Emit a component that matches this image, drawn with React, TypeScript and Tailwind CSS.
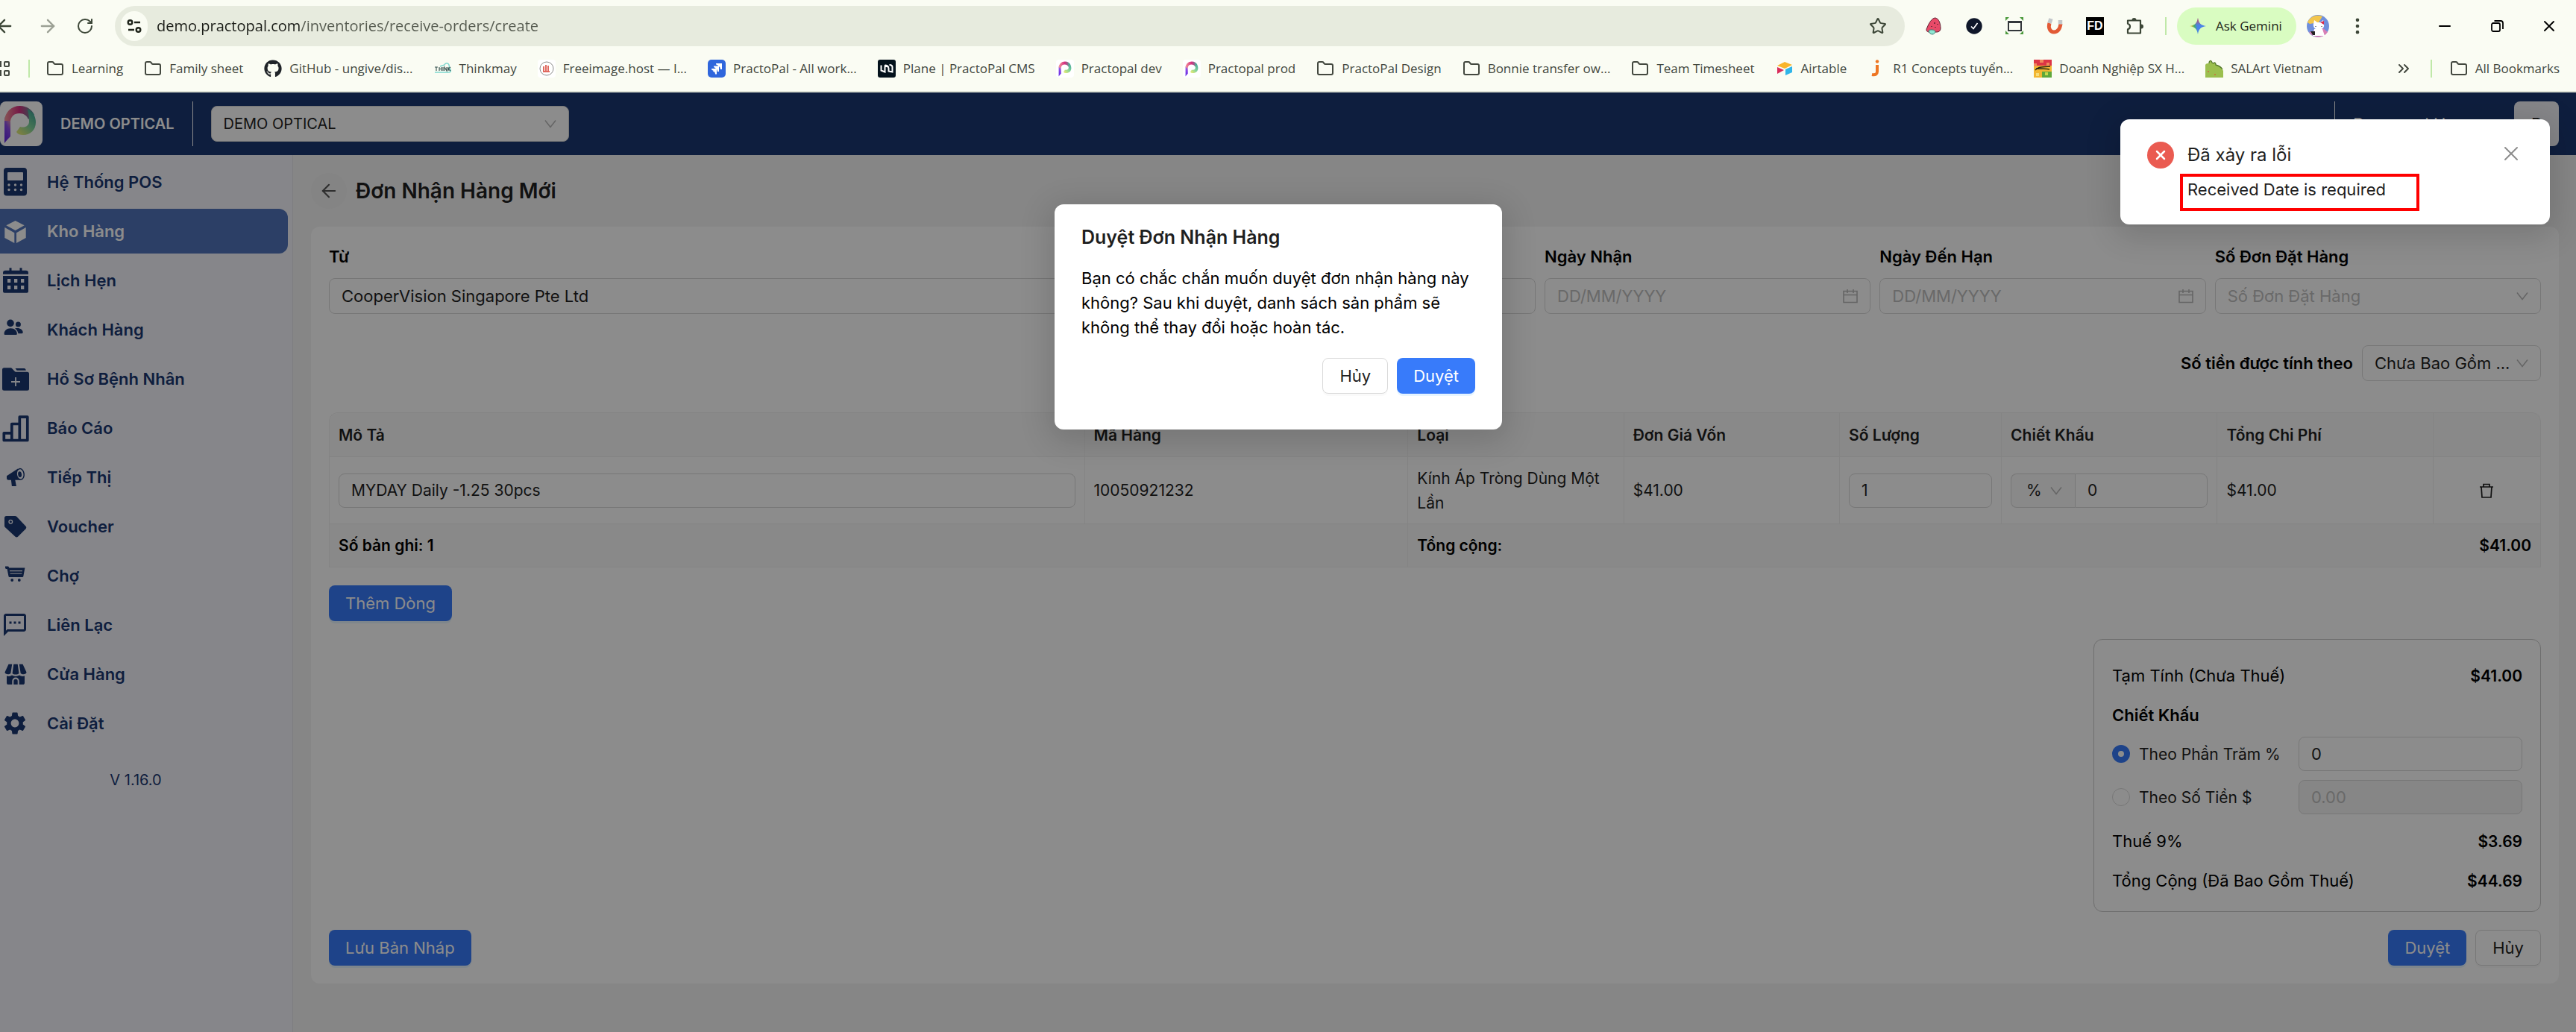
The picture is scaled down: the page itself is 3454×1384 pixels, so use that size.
import type { ReactNode } from 'react'
import clsx from 'clsx'
import { FaGithub } from 'react-icons/fa'
import { MdOutlineSms, MdSettings } from 'react-icons/md'
import {
  ArrowLeft,
  ArrowRight,
  ChevronsRight,
  EllipsisVertical,
  Folder,
  Minus,
  RotateCw,
  Star,
  X,
} from 'lucide-react'

type IconProps = { className?: string }

const Glyph = ({ children, className }: { children: ReactNode; className?: string }) => (
  <svg viewBox="0 0 40 40" fill="currentColor" className={clsx('size-10', className)}>
    {children}
  </svg>
)

const IconPos = () => (
  <Glyph>
    <path
      fillRule="evenodd"
      d="M9 1h23a4 4 0 0 1 4 4v29.500a4 4 0 0 1-4 4H9a4 4 0 0 1-4-4V5a4 4 0 0 1 4-4Zm2 6a1 1 0 0 0-1 1v9a1 1 0 0 0 1 1h19a1 1 0 0 0 1-1V8a1 1 0 0 0-1-1Z"
    />
    {[24, 30.500].map((y) =>
      [12, 20.500, 28.500].map((x) => <circle key={`${x}-${y}`} cx={x} cy={y} r="1.7" fill="#f4f5fa" />)
    )}
  </Glyph>
)

const IconBox = () => (
  <Glyph>
    <path d="M20.600 6 32.700 12.300 20.600 19 8.300 12.300ZM6.300 15l13 7.300V36l-13-7ZM34.700 15 22 22.300V36l12.700-7Z" />
  </Glyph>
)

const IconCalendarGrid = () => (
  <Glyph>
    <path d="M4 11.700V10a3.300 3.300 0 0 1 3.300-3.300h5.200V3.300h3v3.400h11V3.300h3v3.400h5.200A3.300 3.300 0 0 1 38 10v1.700Z" />
    <path
      fillRule="evenodd"
      d="M4 14h34v20.700a2 2 0 0 1-2 2H6a2 2 0 0 1-2-2Zm6 4v5h4.300v-5Zm9 0v5h4.300v-5Zm9 0v5h4.300v-5Zm-18 9v5h4.300v-5Zm9 0v5h4.300v-5Zm9 0v5h4.300v-5Z"
    />
  </Glyph>
)

const IconUsers = () => (
  <Glyph>
    <circle cx="14" cy="11.400" r="4.800" />
    <circle cx="24.400" cy="13" r="3.500" />
    <path d="M5.600 25.500c0-4 3.400-7.300 8.600-7.300s8.600 3.300 8.600 7.300c0 1-.5 1.600-1.400 1.600H7c-.9 0-1.400-.6-1.400-1.600ZM20 18.600c5.400-1.700 10.300 1 10.700 5 0 1-.4 1.600-1.300 1.600h-5c-.4-2.700-2-5-4.400-6.600Z" />
  </Glyph>
)

const IconFolderPlus = () => (
  <Glyph>
    <path d="M5.500 5.300H14c1 0 1.500.3 2.200 1l3.300 3.400c.7.700 1.200 1 2.200 1h14.800A2.500 2.500 0 0 1 39 13.200v20a2.500 2.500 0 0 1-2.500 2.500h-31A2.500 2.500 0 0 1 3 33.200V7.800a2.500 2.500 0 0 1 2.500-2.500ZM20.500 6h12c1.200 0 2 .8 2.300 2.700H22.600Z" />
    <path d="M21 18v12M15 24h12" stroke="#f4f5fa" strokeWidth="1.800" />
  </Glyph>
)

const IconBars = () => (
  <Glyph>
    <path
      d="M5.300 36.500v-9.700h10.500v9.700ZM15.800 36.500v-22h10.500v22ZM26.300 36.500V5.200h10.500v31.300Z"
      fill="none"
      stroke="currentColor"
      strokeWidth="3.700"
      strokeLinejoin="round"
    />
  </Glyph>
)

const IconMegaphone = () => (
  <Glyph>
    <path d="M9 18.300 24 8.500l3.500 15.300H11.400A2.400 2.400 0 0 1 9 21.400ZM14.800 23h5.400l1.700 9h-6Z" />
    <ellipse cx="27.200" cy="15.900" rx="5" ry="7.300" transform="rotate(-8 27 16)" fill="#f4f5fa" stroke="currentColor" strokeWidth="1.500" />
    <ellipse cx="26.600" cy="16" rx="2.400" ry="3.900" transform="rotate(-8 27 16)" />
  </Glyph>
)

const IconTag = () => (
  <Glyph>
    <path d="M8.500 6h11.600c1 0 1.700.4 2.400 1.100l12 12.700c1 1.100 1 2.300 0 3.400L24 33.700c-1.100 1-2.400 1-3.500 0L7 21.300c-.7-.7-1-1.300-1-2.300V8.500A2.500 2.500 0 0 1 8.500 6Z" />
    <circle cx="14.300" cy="13.700" r="2.300" fill="none" stroke="#f4f5fa" strokeWidth="1.300" />
  </Glyph>
)

const IconCart = () => (
  <Glyph>
    <path d="M7 7.500h3.500c1 0 1.500.8 1.700 2h21.200l-2 11c-.2 1-.8 1.600-1.900 1.600H13.200c-1 0-1.600-.6-1.800-1.600L9.600 11H8.300A1.500 1.500 0 0 1 7 9.500Z" />
    <path d="M13 13.600h17M13.600 17.300h15.700" stroke="#f4f5fa" strokeWidth="1.100" />
    <circle cx="16.200" cy="26" r="1.900" />
    <circle cx="25.800" cy="26" r="1.900" />
  </Glyph>
)

const IconStore = () => (
  <Glyph>
    <path d="M11.500 6.700h4.700l-1.900 12.200c-2 2-7.600 1.700-7.800-1.500ZM18.300 6.700h5.400l1.700 12.200c-1.700 2-7.200 2-8.800 0ZM25.800 6.700h4.700l5 10.700c0 3.200-5.700 3.500-7.800 1.500Z" />
    <path
      fillRule="evenodd"
      d="M9 22.500c3 .9 5.300.4 7-1 2.900 1.900 7 1.900 10 0 1.700 1.400 4 1.900 7 1v9.200c0 1.400-.9 2.300-2.300 2.300H11.300C9.900 34 9 33.100 9 31.700Zm7.300 11.500h9.400v-4.800a4.700 4.700 0 0 0-9.400 0Z"
    />
    <path d="M18.300 34v-4.600a2.700 2.700 0 0 1 5.400 0V34Z" />
  </Glyph>
)

const menu = [
  { name: 'Hệ Thống POS', icon: <IconPos /> },
  { name: 'Kho Hàng', icon: <IconBox />, active: true },
  { name: 'Lịch Hẹn', icon: <IconCalendarGrid /> },
  { name: 'Khách Hàng', icon: <IconUsers /> },
  { name: 'Hồ Sơ Bệnh Nhân', icon: <IconFolderPlus /> },
  { name: 'Báo Cáo', icon: <IconBars /> },
  { name: 'Tiếp Thị', icon: <IconMegaphone /> },
  { name: 'Voucher', icon: <IconTag /> },
  { name: 'Chợ', icon: <IconCart /> },
  { name: 'Liên Lạc', icon: <MdOutlineSms className="ml-0.5 size-9" /> },
  { name: 'Cửa Hàng', icon: <IconStore /> },
  { name: 'Cài Đặt', icon: <MdSettings className="ml-0.5 size-9" /> },
]

const PalLogo = ({ className }: IconProps) => (
  <svg viewBox="0 0 60 60" className={className}>
    <defs>
      <linearGradient id="palStem" x1="0" y1="1" x2="0.300" y2="0">
        <stop offset="0" stopColor="#5b1fe0" />
        <stop offset="0.600" stopColor="#8a4be8" />
        <stop offset="1" stopColor="#f2a3a0" />
      </linearGradient>
      <linearGradient id="palTop" x1="0" y1="0" x2="1" y2="0">
        <stop offset="0" stopColor="#f59a9a" />
        <stop offset="0.500" stopColor="#d62f80" />
        <stop offset="1" stopColor="#4b9c9b" />
      </linearGradient>
      <linearGradient id="palBowl" x1="1" y1="0" x2="0.300" y2="1">
        <stop offset="0" stopColor="#2f9a94" />
        <stop offset="0.600" stopColor="#7fd39b" />
        <stop offset="1" stopColor="#dbe77a" />
      </linearGradient>
    </defs>
    <path d="M9 56V26c0-6 3-10 8-13v34c-3 3-6 6-8 9Z" fill="url(#palStem)" />
    <path d="M9 26C10 14 18 6 30 6c9 0 16 5 19 12l-8 6c-2-5-6-8-12-8-7 0-11 4-12 10Z" fill="url(#palTop)" />
    <path d="M40 10c7 4 11 10 11 18 0 10-7 17-17 17-4 0-7-1-9-4l5-7c6 2 12-1 12-7 0-7-1-12-2-17Z" fill="url(#palBowl)" />
  </svg>
)

const ThinkmayMark = () => (
  <svg viewBox="0 0 24 24" className="size-6">
    <path d="M1 17h19c3 0 3-4 1-5l-1-5c-1-3-5-3-6 0L8 9" fill="none" stroke="#7fd8cf" strokeWidth="1.500" />
    <path d="M1 10h4M3 10v5M7 10v5M10 10v5M7 12.500h3M12 10v5M14 15v-5l3 5v-5M19 10v5M22 10l-3 2.500L22 15" fill="none" stroke="#35504e" strokeWidth="1.100" />
  </svg>
)

const FreeimageMark = () => (
  <svg viewBox="0 0 24 24" className="size-6">
    <rect width="24" height="24" rx="4" fill="#fff" />
    <circle cx="12" cy="12" r="9" fill="none" stroke="#8b8b8b" />
    <path d="M8 16V9M11 16V7M14 16V8M7 16h9" stroke="#e0695f" strokeWidth="2" />
  </svg>
)

const JiraMark = () => (
  <svg viewBox="0 0 24 24" className="size-6">
    <rect width="24" height="24" rx="5" fill="#2f66dc" />
    <path d="M11 5h8v8h-2.200c0-3-1-4-3-4V7.500C11.500 7.500 11 6.500 11 5ZM8 8.500h7V16h-2c0-2.500-1-3.500-2.700-3.500V11C8.500 11 8 10 8 8.500ZM5 12h7v7.500h-2c0-2.500-1-3.500-2.700-3.500v-1.500C5.500 14.500 5 13.500 5 12Z" fill="#fff" />
  </svg>
)

const PlaneMark = () => (
  <svg viewBox="0 0 24 24" className="size-6">
    <rect width="24" height="24" rx="3" fill="#04121c" />
    <path d="M4.500 7.500v7l5 2v-7c3-1 5 0 5 2v4l5 1V10c0-2-2-3-4-3M9 8c2-1 4 0 5.500 2" fill="none" stroke="#fff" strokeWidth="2" />
  </svg>
)

const AirtableMark = () => (
  <svg viewBox="0 0 24 24" className="size-6">
    <path d="m2 8 10-5 10 4-10 5Z" fill="#f9b52b" />
    <path d="M13 13 22 9v8l-9 4Z" fill="#2fb5e9" />
    <path d="M2 10v9l9-5Z" fill="#d92c5b" />
  </svg>
)

const JMark = () => (
  <svg viewBox="0 0 24 24" className="size-6">
    <path d="M13 7v9c0 3-2 5-7 4" fill="none" stroke="#ee7623" strokeWidth="4" />
    <circle cx="13" cy="2.500" r="2.200" fill="#ee7623" />
  </svg>
)

const AgriMark = () => (
  <svg viewBox="0 0 24 24" className="size-6">
    <path d="M0 0h24v8H0Z" fill="#dc3545" />
    <path d="M0 8h24v16H0Z" fill="#f2b632" />
    <path d="M11 16h13v8H11Z" fill="#5fa83b" />
    <path d="M8 0h5v4H8ZM0 5h4v4H0ZM17 4h4v4h-4Z" fill="#f08a5d" />
    <path d="M2 14c4-5 8-4 20-5M3 12c5 0 12 0 18 1" fill="none" stroke="#2b2a16" strokeWidth="1.500" />
    <path d="M3 18h4v4H3Z" fill="#f7dc7a" />
    <path d="M15 17h4v4h-4Z" fill="#c5d94c" />
  </svg>
)

const SalMark = () => (
  <svg viewBox="0 0 24 24" className="size-6">
    <path d="M0 24V7c1-2 3-2 5-2 0-4 3-5 4-1l2 1c1-2 3-1 3 2 5 1 8 4 10 8v9Z" fill="#9bbf4e" />
    <path d="M5 5c0-4 3-5 4-1l2 1c1-2 3-1 3 2 4 1 7 3 9 6" fill="none" stroke="#567a2b" strokeWidth="1.300" />
    <circle cx="4" cy="16" r="1" fill="#cf6a3c" />
    <circle cx="13" cy="20" r="1" fill="#cf6a3c" />
  </svg>
)

const FolderMark = () => <Folder className="size-6" strokeWidth={2} color="#43483f" />

const PalMark = () => (
  <span className="rounded bg-white">
    <PalLogo className="size-6" />
  </span>
)

const bookmarks = [
  { name: 'Learning', icon: <FolderMark /> },
  { name: 'Family sheet', icon: <FolderMark /> },
  { name: 'GitHub - ungive/dis...', icon: <FaGithub className="size-6" color="#1f2328" /> },
  { name: 'Thinkmay', icon: <ThinkmayMark /> },
  { name: 'Freeimage.host — I...', icon: <FreeimageMark /> },
  { name: 'PractoPal - All work...', icon: <JiraMark /> },
  { name: 'Plane | PractoPal CMS', icon: <PlaneMark /> },
  { name: 'Practopal dev', icon: <PalMark /> },
  { name: 'Practopal prod', icon: <PalMark /> },
  { name: 'PractoPal Design', icon: <FolderMark /> },
  { name: 'Bonnie transfer ow...', icon: <FolderMark /> },
  { name: 'Team Timesheet', icon: <FolderMark /> },
  { name: 'Airtable', icon: <AirtableMark /> },
  { name: 'R1 Concepts tuyển...', icon: <JMark /> },
  { name: 'Doanh Nghiệp SX H...', icon: <AgriMark /> },
  { name: 'SALArt Vietnam', icon: <SalMark /> },
]

function Extensions() {
  return (
    <div className="flex items-center gap-[30px] pl-[27px]">
      <svg viewBox="0 0 24 24" className="size-6">
        <path d="M14 1c5 1 7 8 7 14 0 3-2 5-5 5H6c-4 0-5-3-3-6C5 9 9 1 14 1Z" fill="#e84a68" stroke="#5d2232" />
        <path d="M5 18c3-2 8-1 9 1 0 2-2 4-4 4s-5-2-5-5Z" fill="#8fe6d2" stroke="#3f8076" />
        <path d="M13 7v2M17 9v1M9 12v1M14 13v1" stroke="#5d2232" strokeWidth="1.500" />
      </svg>
      <svg viewBox="0 0 24 24" className="size-6">
        <circle cx="12" cy="12" r="10.700" fill="#0f172a" />
        <path d="m8 12.500 3 3 5.500-7.500" fill="none" stroke="#fff" strokeWidth="1.700" />
      </svg>
      <svg viewBox="0 0 24 24" className="size-6">
        <path d="M0 0h5L0 5ZM24 0v5l-5-5ZM24 23h-5l5-5ZM0 23v-5l5 5Z" fill="#4c9a3d" />
        <path d="M4 6h17v12H4Z" fill="none" stroke="#33373b" strokeWidth="2" />
        <path d="M3 5h19v3H3Z" fill="#33373b" />
      </svg>
      <svg viewBox="0 0 24 24" className="size-6" fill="none">
        <path d="M5 8c-2 7 1 12 6 12s8-4 9-11" stroke="#e25a35" strokeWidth="5" />
        <path d="m7 2-2 6M19.500 4v5.500" stroke="#c3c7ca" strokeWidth="5.500" />
      </svg>
      <span className="flex size-6 items-center justify-center bg-black font-['Liberation_Sans',sans-serif] text-[16px] font-bold text-white">
        FD
      </span>
      <svg viewBox="0 0 24 24" className="size-6">
        <path
          d="M2 4.500h17v17H2v-5.200c4-1 4-6.600 0-7.600Z"
          fill="none"
          stroke="#3c4637"
          strokeWidth="2.200"
          strokeLinejoin="round"
        />
        <path d="M7.500 4a3 3 0 0 1 6 0ZM20 9.500a3 3 0 0 1 0 6Z" fill="#3c4637" />
      </svg>
    </div>
  )
}

function BrowserBar() {
  return (
    <div className="border-b-2 border-[#dfe3d6] bg-[#fafcf3] font-['Open_Sans',sans-serif] text-[#43483f]">
      <div className="flex h-[70px] items-center">
        <div className="flex w-[154px] items-center">
          <button aria-label="Back" className="-ml-2 w-[58px]"><ArrowLeft className="size-7" color="#3c4637" /></button>
          <button aria-label="Forward" className="w-[52px]"><ArrowRight className="size-7" color="#9ba094" /></button>
          <button aria-label="Reload"><RotateCw className="size-6" color="#3c4637" /></button>
        </div>
        <div className="flex h-[54px] flex-1 items-center rounded-full bg-[#e7ebde] pr-6 pl-2">
          <span className="mr-3 flex h-10 w-9 items-center justify-center rounded-full bg-[#fafcf3]">
            <svg viewBox="0 0 24 24" className="size-6" fill="none" stroke="#1f241b" strokeWidth="2.400">
              <circle cx="6.500" cy="7" r="2.800" />
              <path d="M12 7h8M4 17h8" />
              <circle cx="17.500" cy="17" r="2.800" />
            </svg>
          </span>
          {/* the host is darker than the path */}
          <input
            aria-label="Address"
            defaultValue="demo.practopal.com/inventories/receive-orders/create"
            className="flex-1 bg-[linear-gradient(90deg,#1a1c17_192px,#555a4f_192px)] bg-clip-text text-[20px] text-transparent outline-none"
          />
          <Star className="size-6" color="#3c4637" />
        </div>
        <Extensions />
        <span className="ml-7 h-6 w-[2px] bg-[#bfe8a8]" />
        <button className="ml-3.5 flex h-[50px] w-[160px] items-center gap-3 rounded-full bg-[#d9fcc1] pl-4 text-[17px] text-[#1c2418]">
          <svg viewBox="0 0 24 24" className="size-6">
            <defs>
              <linearGradient id="gem" x1="0.100" y1="0.600" x2="0.900" y2="0.500">
                <stop offset="0" stopColor="#e3b93c" />
                <stop offset="0.250" stopColor="#3fae6a" />
                <stop offset="0.450" stopColor="#4a83e8" />
              </linearGradient>
              <linearGradient id="gemTop" x1="0" y1="0" x2="0" y2="1">
                <stop offset="0" stopColor="#e2473c" />
                <stop offset="0.450" stopColor="#e2473c" stopOpacity="0" />
              </linearGradient>
            </defs>
            <path d="M12 1c1 7 4 10 11 11-7 1-10 4-11 11-1-7-4-10-11-11 7-1 10-4 11-11Z" fill="url(#gem)" />
            <path d="M12 1c1 7 4 10 11 11-7 1-10 4-11 11-1-7-4-10-11-11 7-1 10-4 11-11Z" fill="url(#gemTop)" />
          </svg>
          Ask Gemini
        </button>
        <svg viewBox="0 0 30 30" className="ml-3.5 size-[30px]">
          <circle cx="15" cy="15" r="15" fill="#6f8fdc" />
          <path d="M1 10a15 15 0 0 1 20-8l-5 8-12 2Z" fill="#f3c64c" />
          <path d="M3 23a15 15 0 0 0 25 0l-6-5Z" fill="#d97fb5" />
          <path d="M9 12 10 7l4 3h4l4-3 1 6c1 4-3 7-7 7s-8-3-7-8Z" fill="#fff" />
          <path d="M10 19h11l3 9H8Z" fill="#fff" />
          <path d="m18 10 5-2v5Z" fill="#d92c4b" />
          <path d="M12 15v1M20 15v1" stroke="#222" />
          <path d="M5 22h6v5H8Z" fill="#222" />
        </svg>
        <button aria-label="Menu" className="ml-6"><EllipsisVertical className="size-7" color="#3c4637" /></button>
        <div className="mr-6 ml-[91px] flex items-center gap-[46px] text-black">
          <button aria-label="Minimize"><Minus className="size-6" strokeWidth={2} /></button>
          <button aria-label="Restore">
            <svg viewBox="0 0 24 24" className="size-6" fill="none" stroke="currentColor" strokeWidth="1.800">
              <rect x="5" y="8" width="11" height="11" rx="2" />
              <path d="M8.500 5H17a3 3 0 0 1 3 3v8" />
            </svg>
          </button>
          <button aria-label="Close"><X className="size-6" strokeWidth={2} /></button>
        </div>
      </div>
      <div className="flex h-[52px] items-center pb-2 text-[17px]">
        <div className="flex w-[62px] items-center gap-6">
          <svg viewBox="0 0 14 24" className="h-6 w-3.5" fill="none" stroke="#43483f" strokeWidth="2">
            <rect x="6" y="3" width="6" height="6" rx="1" />
            <rect x="6" y="15" width="6" height="6" rx="1" />
            <path d="M0 3h1v6H0M0 15h1v6H0" />
          </svg>
          <span className="h-6 w-[2px] bg-[#bfe8a8]" />
        </div>
        <nav className="flex flex-1 items-center gap-7">
          {bookmarks.map((b) => (
            <a key={b.name} href="#" className="flex shrink-0 items-center gap-2.5 whitespace-nowrap">
              {b.icon}
              {b.name}
            </a>
          ))}
        </nav>
        <ChevronsRight className="size-6" />
        <span className="mx-6 h-6 w-[2px] bg-[#bfe8a8]" />
        <a href="#" className="mr-[22px] flex items-center gap-2.5">
          <FolderMark />
          All Bookmarks
        </a>
      </div>
    </div>
  )
}

const Chevron = ({ className }: IconProps) => (
  <svg viewBox="0 0 18 18" className={clsx('pointer-events-none absolute top-1/2 size-[18px] -translate-y-1/2', className)}>
    <path d="m2 4.500 7 9 7-9" fill="none" stroke="#b8b8b8" strokeWidth="1.500" />
  </svg>
)

const labelClass = 'mb-3 block font-semibold text-black'
const inputClass = 'h-[46px] w-full rounded-lg border border-[#d9d9d9] bg-white px-4 text-[#1f1f1f]'
const primaryClass = 'h-12 rounded-lg bg-[#387bfa] px-[22px] text-white shadow-[0_3px_0_rgba(5,145,255,0.1)]'
const defaultClass =
  'h-12 rounded-lg border border-[#d9d9d9] bg-white px-[22px] text-[#1f1f1f] shadow-[0_3px_0_rgba(0,0,0,0.02)]'

type SelectProps = { id: string; value: string; label?: string; muted?: boolean; className?: string }

function Select({ id, value, label, muted, className }: SelectProps) {
  return (
    <div className={clsx('relative', className)}>
      <select
        id={id}
        aria-label={label}
        className={clsx(
          'h-12 w-full appearance-none rounded-lg border border-[#d9d9d9] bg-white pr-9 pl-4',
          muted ? 'text-[#bfbfbf]' : 'text-[#1f1f1f]'
        )}
      >
        <option>{value}</option>
      </select>
      <Chevron className="right-4" />
    </div>
  )
}

function DateField({ id, label }: { id: string; label: string }) {
  return (
    <div>
      <label htmlFor={id} className={labelClass}>{label}</label>
      <div className="relative">
        <input
          id={id}
          placeholder="DD/MM/YYYY"
          className="h-12 w-full rounded-lg border border-[#d9d9d9] bg-white pr-12 pl-4 placeholder:text-[#bfbfbf]"
        />
        <svg viewBox="0 0 22 22" className="pointer-events-none absolute top-[13px] right-4 size-[22px]" fill="none" stroke="#b8b8b8" strokeWidth="1.600">
          <path d="M2 4.500h18v15H2ZM2 9.500h18M7 2v5M15 2v5" />
        </svg>
      </div>
    </div>
  )
}

function Header() {
  return (
    <header className="flex h-[84px] items-center bg-[#1b3771] text-white">
      <span className="flex h-[60px] w-[57px] items-center justify-end overflow-hidden rounded-lg bg-white">
        <PalLogo className="size-[60px] shrink-0" />
      </span>
      <span className="ml-6 text-[20px] font-semibold">DEMO OPTICAL</span>
      <span className="mx-6 h-[60px] w-px bg-white" />
      <Select id="branch" label="Branch" value="DEMO OPTICAL" className="w-[480px] text-[20px]" />
      <div className="ml-auto flex items-center pr-[23px]">
        <span className="h-[60px] w-px bg-white" />
        <span className="ml-6 w-[216px]">Password User</span>
        <span className="flex size-[60px] items-center justify-center rounded-lg bg-[#f4f5fa] text-[#1f1f1f]">P</span>
      </div>
    </header>
  )
}

function Sidebar() {
  return (
    <aside className="w-[393px] shrink-0 border-r border-[#e3e4ea] bg-[#f4f5fb] pt-1.5 text-[#1b3771]">
      <nav className="flex flex-col gap-1.5">
        {menu.map((item) => (
          <a
            key={item.name}
            href="#"
            className={clsx(
              'mr-1.5 flex h-[60px] items-center rounded-r-xl font-semibold',
              item.active && 'bg-[#5074bb] text-white'
            )}
          >
            <span className="flex w-[63px] items-center">{item.icon}</span>
            {item.name}
          </a>
        ))}
      </nav>
      <p className="mt-[30px] pr-7 text-center text-[20px]">V 1.16.0</p>
    </aside>
  )
}

const headers = ['Mô Tả', 'Mã Hàng', 'Loại', 'Đơn Giá Vốn', 'Số Lượng', 'Chiết Khấu', 'Tổng Chi Phí', '']
const cell = 'border-r border-b border-[#f0f0f0] px-3'

function ItemsTable() {
  return (
    <table className="w-full table-fixed border-separate border-spacing-0 rounded-t-xl border-t border-l border-[#f0f0f0] text-left text-[21px] text-[#1f1f1f]">
      <colgroup>
        <col className="w-[34.15%]" />
        <col className="w-[14.63%]" />
        <col className="w-[9.76%]" />
        <col className="w-[9.76%]" />
        <col className="w-[7.32%]" />
        <col className="w-[9.76%]" />
        <col className="w-[9.76%]" />
        <col />
      </colgroup>
      <thead>
        <tr className="h-[59px]">
          {headers.map((h) => (
            <th key={h} className={clsx(cell, 'bg-[#fafafa] font-semibold first:rounded-tl-xl last:rounded-tr-xl')}>
              {h}
            </th>
          ))}
        </tr>
      </thead>
      <tbody>
        <tr className="h-[90px]">
          <td className={cell}>
            <input aria-label="Mô Tả" defaultValue="MYDAY Daily -1.25 30pcs" className={inputClass} />
          </td>
          <td className={cell}>10050921232</td>
          <td className={cell}>Kính Áp Tròng Dùng Một Lần</td>
          <td className={cell}>$41.00</td>
          <td className={cell}>
            <input aria-label="Số Lượng" defaultValue="1" className={inputClass} />
          </td>
          <td className={cell}>
            <div className="flex">
              <div className="relative w-[86px] shrink-0">
                <select
                  aria-label="Loại chiết khấu"
                  className="h-[46px] w-full appearance-none rounded-l-lg border border-r-0 border-[#d9d9d9] bg-[#fafafa] pl-5"
                >
                  <option>%</option>
                </select>
                <Chevron className="right-4" />
              </div>
              <input
                aria-label="Chiết Khấu"
                defaultValue="0"
                className="h-[46px] w-full min-w-0 rounded-r-lg border border-[#d9d9d9] bg-white px-4"
              />
            </div>
          </td>
          <td className={cell}>$41.00</td>
          <td className={cell}>
            <button aria-label="Xóa" className="mx-auto block">
              <svg viewBox="0 0 22 22" className="size-[22px]" fill="none" stroke="#1f1f1f" strokeWidth="1.700">
                <path d="M2 6h18M7 5.500V2.500h8v3M4 6l1 14h12l1-14" />
              </svg>
            </button>
          </td>
        </tr>
      </tbody>
      <tfoot>
        <tr className="h-[58px] bg-[#fafafa] font-semibold text-black">
          <td colSpan={2} className={cell}>Số bản ghi: 1</td>
          <td colSpan={6} className={cell}>
            <div className="flex justify-between">
              <span>Tổng cộng:</span>
              <span>$41.00</span>
            </div>
          </td>
        </tr>
      </tfoot>
    </table>
  )
}

const radioClass =
  'size-6 shrink-0 appearance-none rounded-full border border-[#d9d9d9] bg-white checked:border-8 checked:border-[#387bfa]'

function Summary() {
  return (
    <section className="w-[600px] rounded-xl border border-[#c8c8c8] px-6 pt-8 pb-6 text-black">
      <p className="flex h-[33px] justify-between">
        Tạm Tính (Chưa Thuế)<b className="text-[21px] font-semibold">$41.00</b>
      </p>
      <p className="mt-5 h-[33px] font-semibold">Chiết Khấu</p>
      <div className="mt-3 flex items-center justify-between">
        <label htmlFor="byPercent" className="flex items-center gap-3 text-[21px] text-[#1f1f1f]">
          <input id="byPercent" type="radio" name="discount" defaultChecked className={radioClass} />
          Theo Phần Trăm %
        </label>
        <div className="w-[300px]">
          <input aria-label="Theo Phần Trăm %" defaultValue="0" className={inputClass} />
        </div>
      </div>
      <div className="mt-3 flex items-center justify-between">
        <label htmlFor="byAmount" className="flex items-center gap-3 text-[21px] text-[#1f1f1f]">
          <input id="byAmount" type="radio" name="discount" className={radioClass} />
          Theo Số Tiền $
        </label>
        <div className="w-[300px]">
          <input
            aria-label="Theo Số Tiền $"
            disabled
            placeholder="0.00"
            className="h-[46px] w-full rounded-lg border border-[#d9d9d9] bg-[#f5f5f5] px-4 placeholder:text-[#bfbfbf]"
          />
        </div>
      </div>
      <p className="mt-5 flex h-[33px] justify-between">
        Thuế 9%<b className="text-[21px] font-semibold">$3.69</b>
      </p>
      <p className="mt-5 flex h-[33px] justify-between">
        Tổng Cộng (Đã Bao Gồm Thuế)<b className="text-[21px] font-semibold">$44.69</b>
      </p>
    </section>
  )
}

function ConfirmDialog() {
  return (
    <div
      role="dialog"
      aria-labelledby="confirmTitle"
      className="w-[600px] rounded-xl bg-white p-9 pt-7 pb-12 shadow-[0_9px_40px_8px_rgba(0,0,0,0.14)]"
    >
      <h2 id="confirmTitle" className="text-[25px] font-semibold text-[#1f1f1f]">Duyệt Đơn Nhận Hàng</h2>
      <p className="mt-[22px] text-black">
        Bạn có chắc chắn muốn duyệt đơn nhận hàng này không? Sau khi duyệt, danh sách sản phẩm sẽ không thể thay đổi
        hoặc hoàn tác.
      </p>
      <div className="mt-6 flex justify-end gap-3">
        <button className={defaultClass}>Hủy</button>
        <button className={primaryClass}>Duyệt</button>
      </div>
    </div>
  )
}

function Toast() {
  return (
    <div
      role="alert"
      className="absolute top-9 right-[35px] flex w-[576px] rounded-xl bg-white px-9 pt-7 pb-[30px] text-[#1f1f1f] shadow-[0_9px_40px_8px_rgba(0,0,0,0.14)]"
    >
      <span className="mt-0.5 flex size-9 shrink-0 items-center justify-center rounded-full bg-[#ea5b51]">
        <X className="size-5" color="#fff" strokeWidth={3} />
      </span>
      <div className="relative ml-[18px] flex-1">
        <p className="text-[24px] leading-10">Đã xảy ra lỗi</p>
        <p className="mt-2.5">Received Date is required</p>
        <span className="absolute -bottom-3 -left-2.5 h-[50px] w-[321px] border-4 border-[#ff0000]" />
      </div>
      <button aria-label="Đóng" className="mt-0.5 self-start">
        <X className="size-8" color="#8c8c8c" strokeWidth={1.500} />
      </button>
    </div>
  )
}

export default function App() {
  return (
    <div className="flex min-h-screen flex-col">
      <BrowserBar />
      <div className="relative flex flex-1 flex-col overflow-hidden bg-[#f5f5f5] font-['Inter',sans-serif] text-[22px] leading-[33px]">
        <Header />
        <div className="flex flex-1">
          <Sidebar />
          <main className="flex-1 pt-6 pr-[23px] pl-6">
            <div className="flex items-center gap-3">
              <button aria-label="Quay lại" className="flex size-12 items-center justify-center rounded-full bg-[#f0f0f0]">
                <ArrowLeft className="size-7" color="#555" strokeWidth={1.800} />
              </button>
              <h1 className="text-[28px] font-semibold text-[#1f1f1f]">Đơn Nhận Hàng Mới</h1>
            </div>
            <div className="mt-6 rounded-xl bg-white p-6">
              <div className="grid grid-cols-[37fr_10fr_10fr_10fr] gap-3">
                <div>
                  <label htmlFor="from" className={labelClass}>Từ</label>
                  <input
                    id="from"
                    defaultValue="CooperVision Singapore Pte Ltd"
                    className="h-12 w-full rounded-lg border border-[#d9d9d9] bg-white px-4 text-[#1f1f1f]"
                  />
                </div>
                <DateField id="received" label="Ngày Nhận" />
                <DateField id="due" label="Ngày Đến Hạn" />
                <div>
                  <label htmlFor="po" className={labelClass}>Số Đơn Đặt Hàng</label>
                  <Select id="po" value="Số Đơn Đặt Hàng" muted />
                </div>
              </div>
              <div className="mt-[42px] flex items-center justify-end gap-3">
                <label htmlFor="taxMode" className="font-semibold text-black">Số tiền được tính theo</label>
                <Select id="taxMode" value="Chưa Bao Gồm ..." className="w-[240px]" />
              </div>
              <div className="mt-[42px]">
                <ItemsTable />
              </div>
              <button className={clsx(primaryClass, 'mt-6')}>Thêm Dòng</button>
              <div className="mt-6 flex justify-end">
                <Summary />
              </div>
              <div className="mt-6 flex gap-3">
                <button className={clsx(primaryClass, 'mr-auto')}>Lưu Bản Nháp</button>
                <button className={primaryClass}>Duyệt</button>
                <button className={defaultClass}>Hủy</button>
              </div>
            </div>
          </main>
        </div>
        <div className="absolute inset-0 flex items-start justify-center bg-black/45 pt-[150px] pr-[26px]">
          <ConfirmDialog />
        </div>
        <Toast />
      </div>
    </div>
  )
}
